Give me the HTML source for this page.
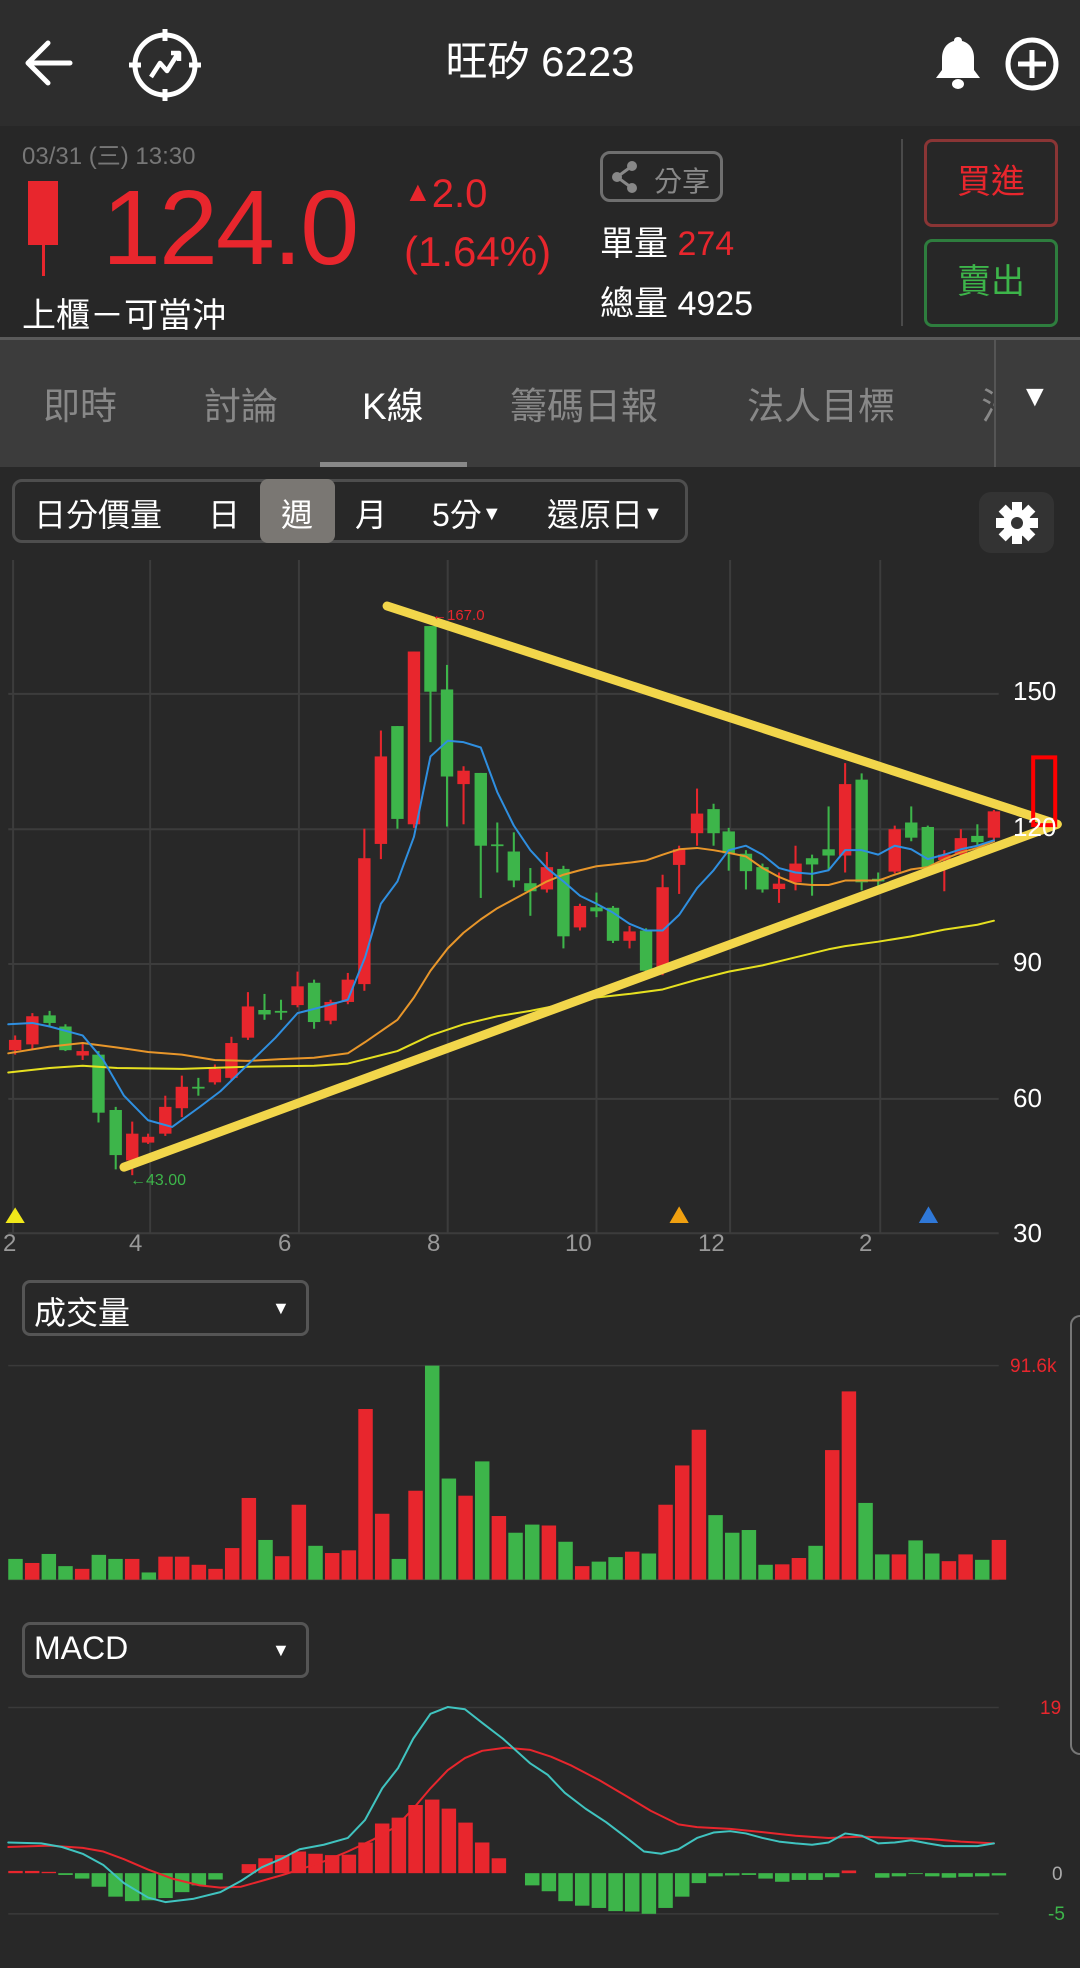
<!DOCTYPE html>
<html><head><meta charset="utf-8">
<style>
*{margin:0;padding:0;box-sizing:border-box}
body{width:1080px;height:1968px;background:#282828;font-family:"Liberation Sans","Noto Sans CJK TC",sans-serif;color:#fff;position:relative;overflow:hidden}
.a{position:absolute;white-space:nowrap}
svg{position:absolute;overflow:visible}
</style></head><body>
<!-- header -->
<div class="a" style="left:0;top:0;width:1080px;height:126px;background:#2d2d2d"></div>
<svg style="left:20px;top:35px" width="60" height="60" viewBox="0 0 60 60"><path d="M50 28H10M28 8L8 28l20 20" fill="none" stroke="#fff" stroke-width="5" stroke-linecap="round" stroke-linejoin="round"/></svg>
<svg style="left:125px;top:25px" width="80" height="80" viewBox="0 0 80 80"><circle cx="40" cy="40" r="30" fill="none" stroke="#fff" stroke-width="5"/><path d="M40 4v12M40 64v12M4 40h12M64 40h12" stroke="#fff" stroke-width="5"/><path d="M26 52l9-14 7 8 10-16M46 28h8v8" fill="none" stroke="#fff" stroke-width="4.5" stroke-linejoin="round"/></svg>
<div class="a" style="left:0;width:1080px;top:40px;text-align:center;font-size:42px;line-height:44px">旺矽 6223</div>
<svg style="left:932px;top:34px" width="52" height="56" viewBox="0 0 52 56"><path d="M26 3c-3 0-4 2-4 4-8 2-12 9-12 17v12l-6 8h44l-6-8V24c0-8-4-15-12-17 0-2-1-4-4-4z" fill="#fff"/><ellipse cx="26" cy="50" rx="6" ry="5" fill="#fff"/></svg>
<svg style="left:1004px;top:36px" width="56" height="56" viewBox="0 0 56 56"><circle cx="28" cy="28" r="24" fill="none" stroke="#fff" stroke-width="5"/><path d="M28 14v28M14 28h28" stroke="#fff" stroke-width="5"/></svg>
<!-- info -->
<div class="a" style="left:0;top:126px;width:1080px;height:211px;background:#272727"></div>
<div class="a" style="left:22px;top:136px;font-size:24px;color:#777">03/31 (三) 13:30</div>
<div class="a" style="left:28px;top:181px;width:30px;height:64px;background:#e8262d"></div>
<div class="a" style="left:42px;top:244px;width:3px;height:32px;background:#e8262d"></div>
<div class="a" style="left:102px;top:168px;font-size:106px;color:#e8262d;letter-spacing:-2px">124.0</div>
<div class="a" style="left:404px;top:172px;font-size:40px;color:#e8262d"><span style="font-size:28px;vertical-align:6px">▲</span>2.0</div>
<div class="a" style="left:404px;top:228px;font-size:42px;color:#e8262d">(1.64%)</div>
<div class="a" style="left:22px;top:288px;font-size:34px">上櫃－可當沖</div>
<div class="a" style="left:600px;top:151px;width:123px;height:51px;border:3px solid #6f6f6f;border-radius:10px"></div>
<svg style="left:610px;top:160px" width="30" height="34" viewBox="0 0 30 34"><circle cx="22" cy="6" r="5" fill="#888"/><circle cx="7" cy="17" r="5" fill="#888"/><circle cx="22" cy="28" r="5" fill="#888"/><path d="M22 6L7 17l15 11" fill="none" stroke="#888" stroke-width="3"/></svg>
<div class="a" style="left:654px;top:160px;font-size:28px;color:#888">分享</div>
<div class="a" style="left:600px;top:216px;font-size:34px">單量 <span style="color:#e8262d">274</span></div>
<div class="a" style="left:600px;top:276px;font-size:34px">總量 4925</div>
<div class="a" style="left:901px;top:139px;width:2px;height:187px;background:#4a4a4a"></div>
<div class="a" style="left:924px;top:139px;width:134px;height:88px;border:3px solid #8a3535;border-radius:8px;text-align:center;line-height:80px;font-size:34px;color:#e8262d">買進</div>
<div class="a" style="left:924px;top:239px;width:134px;height:88px;border:3px solid #2e7d3e;border-radius:8px;text-align:center;line-height:80px;font-size:34px;color:#3db54a">賣出</div>
<div class="a" style="left:0;top:337px;width:1080px;height:3px;background:#5a5a5a"></div>
<!-- tabs -->
<div class="a" style="left:0;top:340px;width:1080px;height:127px;background:#3c3c3c;overflow:hidden">
<div class="a" style="left:43px;top:36px;font-size:37px;color:#888">即時</div>
<div class="a" style="left:204px;top:36px;font-size:37px;color:#888">討論</div>
<div class="a" style="left:362px;top:36px;font-size:37px;color:#fff">K線</div>
<div class="a" style="left:510px;top:36px;font-size:37px;color:#888">籌碼日報</div>
<div class="a" style="left:747px;top:36px;font-size:37px;color:#888">法人目標</div>
<div class="a" style="left:981px;top:36px;font-size:37px;color:#888;width:14px;overflow:hidden">法</div>
<div class="a" style="left:320px;top:122px;width:147px;height:5px;background:#888"></div>
<div class="a" style="left:994px;top:0;width:86px;height:127px;background:#3c3c3c"></div>
<div class="a" style="left:994px;top:0;width:2px;height:127px;background:#555"></div>
<div class="a" style="left:1020px;top:40px;font-size:30px;color:#fff">▼</div>
</div>
<!-- toolbar -->
<div class="a" style="left:12px;top:479px;width:676px;height:64px;border:3px solid #4e4e4e;border-radius:10px"></div>
<div class="a" style="left:260px;top:479px;width:75px;height:64px;background:#7a7773;border-radius:8px"></div>
<div class="a" style="left:34px;top:490px;font-size:32px">日分價量</div>
<div class="a" style="left:208px;top:490px;font-size:32px">日</div>
<div class="a" style="left:281px;top:490px;font-size:32px">週</div>
<div class="a" style="left:355px;top:490px;font-size:32px">月</div>
<div class="a" style="left:432px;top:490px;font-size:32px">5分<span style="font-size:20px;vertical-align:6px">▼</span></div>
<div class="a" style="left:547px;top:490px;font-size:32px">還原日<span style="font-size:20px;vertical-align:6px">▼</span></div>
<div class="a" style="left:979px;top:492px;width:75px;height:61px;background:#333;border-radius:12px"></div>
<svg style="left:994px;top:500px" width="46" height="46" viewBox="0 0 46 46"><g fill="#fff" transform="translate(23 23)"><circle r="14"/><g id="t"><rect x="-5" y="-21" width="10" height="9"/></g><use href="#t" transform="rotate(45)"/><use href="#t" transform="rotate(90)"/><use href="#t" transform="rotate(135)"/><use href="#t" transform="rotate(180)"/><use href="#t" transform="rotate(225)"/><use href="#t" transform="rotate(270)"/><use href="#t" transform="rotate(315)"/></g><circle cx="23" cy="23" r="6" fill="#333"/></svg>
<!-- chart svg -->
<svg id="ch" style="left:0;top:560px" width="1080" height="700" viewBox="0 0 1568 1568" preserveAspectRatio="none"></svg>
<div class="a" style="left:1013px;top:676px;font-size:26px">150</div>
<div class="a" style="left:1013px;top:812px;font-size:26px">120</div>
<div class="a" style="left:1013px;top:947px;font-size:26px">90</div>
<div class="a" style="left:1013px;top:1083px;font-size:26px">60</div>
<div class="a" style="left:1013px;top:1218px;font-size:26px">30</div>
<div class="a" style="left:3px;top:1230px;font-size:24px;color:#999">2</div>
<div class="a" style="left:129px;top:1230px;font-size:24px;color:#999">4</div>
<div class="a" style="left:278px;top:1230px;font-size:24px;color:#999">6</div>
<div class="a" style="left:427px;top:1230px;font-size:24px;color:#999">8</div>
<div class="a" style="left:565px;top:1230px;font-size:24px;color:#999">10</div>
<div class="a" style="left:698px;top:1230px;font-size:24px;color:#999">12</div>
<div class="a" style="left:859px;top:1230px;font-size:24px;color:#999">2</div>
<div class="a" style="left:432px;top:607px;font-size:15px;color:#e8262d">←167.0</div>
<div class="a" style="left:130px;top:1172px;font-size:16px;color:#3db54a">←43.00</div>
<!-- volume -->
<svg id="vm" style="left:0;top:1260px" width="1080" height="708" viewBox="0 0 1568 1568" preserveAspectRatio="none"></svg>
<div class="a" style="left:22px;top:1280px;width:287px;height:56px;border:3px solid #555;border-radius:8px"></div>
<div class="a" style="left:34px;top:1288px;font-size:32px">成交量</div>
<div class="a" style="left:272px;top:1298px;font-size:18px">▼</div>
<div class="a" style="left:1010px;top:1356px;font-size:19px;color:#e8262d">91.6k</div>
<div class="a" style="left:22px;top:1622px;width:287px;height:56px;border:3px solid #555;border-radius:8px"></div>
<div class="a" style="left:34px;top:1630px;font-size:32px">MACD</div>
<div class="a" style="left:272px;top:1640px;font-size:18px">▼</div>
<div class="a" style="left:1040px;top:1698px;font-size:19px;color:#e8262d">19</div>
<div class="a" style="left:1052px;top:1864px;font-size:19px;color:#aaa">0</div>
<div class="a" style="left:1048px;top:1904px;font-size:19px;color:#3db54a">-5</div>
<div class="a" style="left:1070px;top:1315px;width:14px;height:440px;border:2px solid #777;border-right:none;border-radius:10px 0 0 10px"></div>
<script>
var R='#e8262d',G='#3db54a',NS='http://www.w3.org/2000/svg';
function el(p,t,a){var e=document.createElementNS(NS,t);for(var k in a)e.setAttribute(k,a[k]);p.appendChild(e);return e;}
var ch=document.getElementById('ch');
[300,603,905,1207,1508].forEach(function(y){el(ch,'line',{x1:12,x2:1450,y1:y,y2:y,stroke:'#3c3c3c','stroke-width':2,'vector-effect':'non-scaling-stroke'});});
[19,218,434,650,866,1060,1278].forEach(function(x){el(ch,'line',{x1:x,x2:x,y1:0,y2:1508,stroke:'#3c3c3c','stroke-width':2,'vector-effect':'non-scaling-stroke'});});
var C=[[22,R,1075,1098,1065,1108],[47,R,1022,1085,1015,1095],[72,G,1020,1037,1010,1045],[95,G,1045,1098,1040,1100],[120,R,1100,1110,1080,1120],[143,G,1108,1238,1100,1260],[168,G,1232,1333,1225,1365],[192,R,1285,1345,1258,1378],[215,R,1292,1305,1285,1308],[240,R,1225,1285,1200,1290],[264,R,1180,1228,1155,1248],[288,G,1180,1184,1160,1200],[312,R,1140,1170,1130,1175],[336,R,1082,1160,1068,1165],[360,R,1000,1070,968,1075],[384,G,1008,1018,972,1030],[408,G,1010,1014,985,1030],[432,R,955,997,922,1002],[456,G,947,1035,940,1050],[480,R,990,1032,985,1040],[505,R,940,990,925,995],[529,R,668,950,602,965],[553,R,440,636,382,670],[577,G,372,580,372,602],[601,R,205,592,205,600],[625,G,148,295,148,408],[649,G,290,485,235,597],[673,R,472,502,462,592],[698,G,477,640,477,757],[722,G,637,641,588,700],[746,G,653,718,610,733],[770,G,724,742,690,797],[794,R,688,738,654,745],[818,G,692,843,685,870],[842,R,775,823,770,830],[866,G,778,787,745,800],[890,G,779,853,775,858],[914,R,832,853,820,870],[938,G,830,920,825,925],[962,R,733,920,705,930],[986,R,648,683,640,748],[1012,R,568,612,512,640],[1036,G,558,612,546,640],[1058,G,608,657,600,696],[1083,G,658,697,650,738],[1107,G,688,738,680,745],[1131,R,725,737,700,768],[1155,R,680,722,640,740],[1179,G,668,682,660,752],[1203,G,648,662,552,695],[1227,R,502,662,455,700],[1251,G,492,722,478,740],[1275,G,714,720,700,730],[1299,R,603,698,595,702],[1323,G,588,622,552,630],[1347,G,598,688,595,692],[1371,R,660,672,650,742],[1395,R,623,660,603,665],[1419,G,618,632,592,640],[1443,R,563,622,560,632]];
C.forEach(function(c){el(ch,'rect',{x:c[0]-1.5,y:c[4],width:3,height:c[5]-c[4],fill:c[1]});el(ch,'rect',{x:c[0]-9,y:c[2],width:18,height:Math.max(4,c[3]-c[2]),fill:c[1]});});
function pl(p,pts,col,w){el(p,'polyline',{points:pts,fill:'none',stroke:col,'stroke-width':w,'vector-effect':'non-scaling-stroke','stroke-linejoin':'round','stroke-linecap':'round'});}
pl(ch,'12,1148 72,1138 120,1133 170,1138 264,1140 360,1135 456,1133 505,1128 577,1100 625,1065 673,1040 722,1022 770,1010 818,995 866,980 914,972 962,962 1012,940 1058,922 1107,908 1155,890 1203,872 1227,865 1275,855 1323,843 1371,828 1419,817 1443,808','#e6e020',2);
pl(ch,'12,1105 72,1090 120,1082 170,1092 215,1102 264,1108 312,1120 360,1122 408,1118 456,1115 505,1105 530,1080 577,1030 601,980 625,920 650,870 673,835 698,805 722,780 746,760 770,740 794,720 818,705 842,695 866,686 890,682 914,678 938,673 962,660 986,648 1012,645 1036,650 1058,656 1083,664 1107,690 1131,710 1155,725 1179,728 1203,728 1227,718 1251,718 1275,718 1299,705 1323,693 1347,688 1371,670 1395,655 1419,645 1443,630','#e8962a',2);
pl(ch,'12,1040 47,1037 72,1045 120,1065 150,1120 180,1200 215,1255 250,1270 290,1225 320,1190 360,1130 400,1070 432,1015 470,1000 505,985 530,890 553,770 577,720 601,620 625,440 650,405 673,408 698,420 722,520 746,595 770,650 794,690 818,720 842,752 866,770 890,790 914,815 938,830 962,830 986,795 1012,735 1036,695 1058,650 1083,640 1107,660 1131,690 1155,700 1179,703 1203,695 1227,650 1251,650 1275,660 1299,640 1323,648 1347,670 1371,660 1395,648 1419,640 1443,628','#2f8fe0',2);
pl(ch,'562,103 1535,592','#f2d64b',9);
pl(ch,'180,1360 1535,592','#f2d64b',9);
el(ch,'rect',{x:1500,y:442,width:32,height:152,fill:'none',stroke:'#f00','stroke-width':4,'vector-effect':'non-scaling-stroke'});
el(ch,'polygon',{points:'8,1485 22,1450 36,1485',fill:'#f0e81a'});
el(ch,'polygon',{points:'972,1485 986,1448 1000,1485',fill:'#f0a010'});
el(ch,'polygon',{points:'1334,1485 1348,1448 1362,1485',fill:'#2f78d8'});
var vm=document.getElementById('vm');
[234,708].forEach(function(y){el(vm,'line',{x1:12,x2:1450,y1:y,y2:y,stroke:'#3a3a3a','stroke-width':1.5,'vector-effect':'non-scaling-stroke'});});
[991,1448].forEach(function(y){el(vm,'line',{x1:12,x2:1450,y1:y,y2:y,stroke:'#3a3a3a','stroke-width':1.5,'vector-effect':'non-scaling-stroke'});});
var V=[[662,G],[671,R],[651,G],[678,G],[684,R],[653,G],[662,G],[662,R],[692,G],[657,R],[657,R],[675,R],[684,R],[638,R],[527,R],[620,G],[656,R],[542,R],[633,G],[649,R],[643,R],[330,R],[562,R],[662,G],[511,R],[234,G],[484,G],[522,R],[446,G],[567,R],[604,G],[586,G],[588,R],[624,G],[678,R],[668,G],[658,G],[646,R],[650,G],[542,R],[455,R],[376,R],[565,G],[604,G],[598,G],[675,G],[674,R],[660,R],[633,G],[421,R],[291,R],[538,G],[652,G],[652,R],[621,G],[650,G],[667,R],[652,R],[664,G],[620,R]];
V.forEach(function(v,i){var x=12+24.2*i;el(vm,'rect',{x:x,y:v[0],width:21,height:708-v[0],fill:v[1]});});
var M=[1353,1353,1355,1362,1370,1388,1410,1420,1418,1413,1400,1385,1372,1358,1338,1325,1318,1310,1315,1318,1317,1290,1248,1235,1207,1195,1215,1246,1290,1325,1358,1385,1398,1420,1430,1435,1442,1443,1448,1435,1410,1380,1365,1363,1362,1370,1377,1373,1373,1367,1352,1358,1368,1365,1360,1365,1368,1366,1365,1363];
M.forEach(function(m,i){var x=12+24.2*i;if(m<1358)el(vm,'rect',{x:x,y:m,width:21,height:1358-m,fill:R});else if(m>1358)el(vm,'rect',{x:x,y:1358,width:21,height:m-1358,fill:G});});
pl(vm,'12,1300 72,1297 120,1302 150,1310 180,1327 215,1350 250,1370 290,1385 320,1390 350,1388 380,1375 410,1362 435,1350 470,1332 505,1310 540,1285 575,1255 600,1215 625,1170 650,1130 675,1103 700,1087 735,1080 770,1085 800,1100 830,1120 870,1152 910,1188 945,1220 985,1250 1012,1256 1060,1260 1107,1267 1155,1275 1203,1280 1251,1277 1299,1280 1347,1282 1395,1288 1443,1292',R,2);
pl(vm,'12,1290 60,1292 90,1300 120,1315 150,1340 180,1380 215,1412 240,1422 280,1415 320,1400 350,1375 380,1345 410,1325 435,1305 470,1295 505,1280 530,1240 555,1170 578,1125 600,1060 625,1005 650,990 675,995 700,1025 730,1060 770,1115 795,1140 820,1180 850,1215 880,1245 910,1280 935,1310 960,1315 985,1305 1012,1280 1036,1268 1060,1265 1083,1270 1107,1280 1131,1288 1155,1292 1179,1295 1203,1290 1227,1270 1251,1275 1275,1292 1299,1290 1323,1285 1347,1292 1371,1298 1419,1298 1443,1292','#40c4c0',2);
</script>
</body></html>
